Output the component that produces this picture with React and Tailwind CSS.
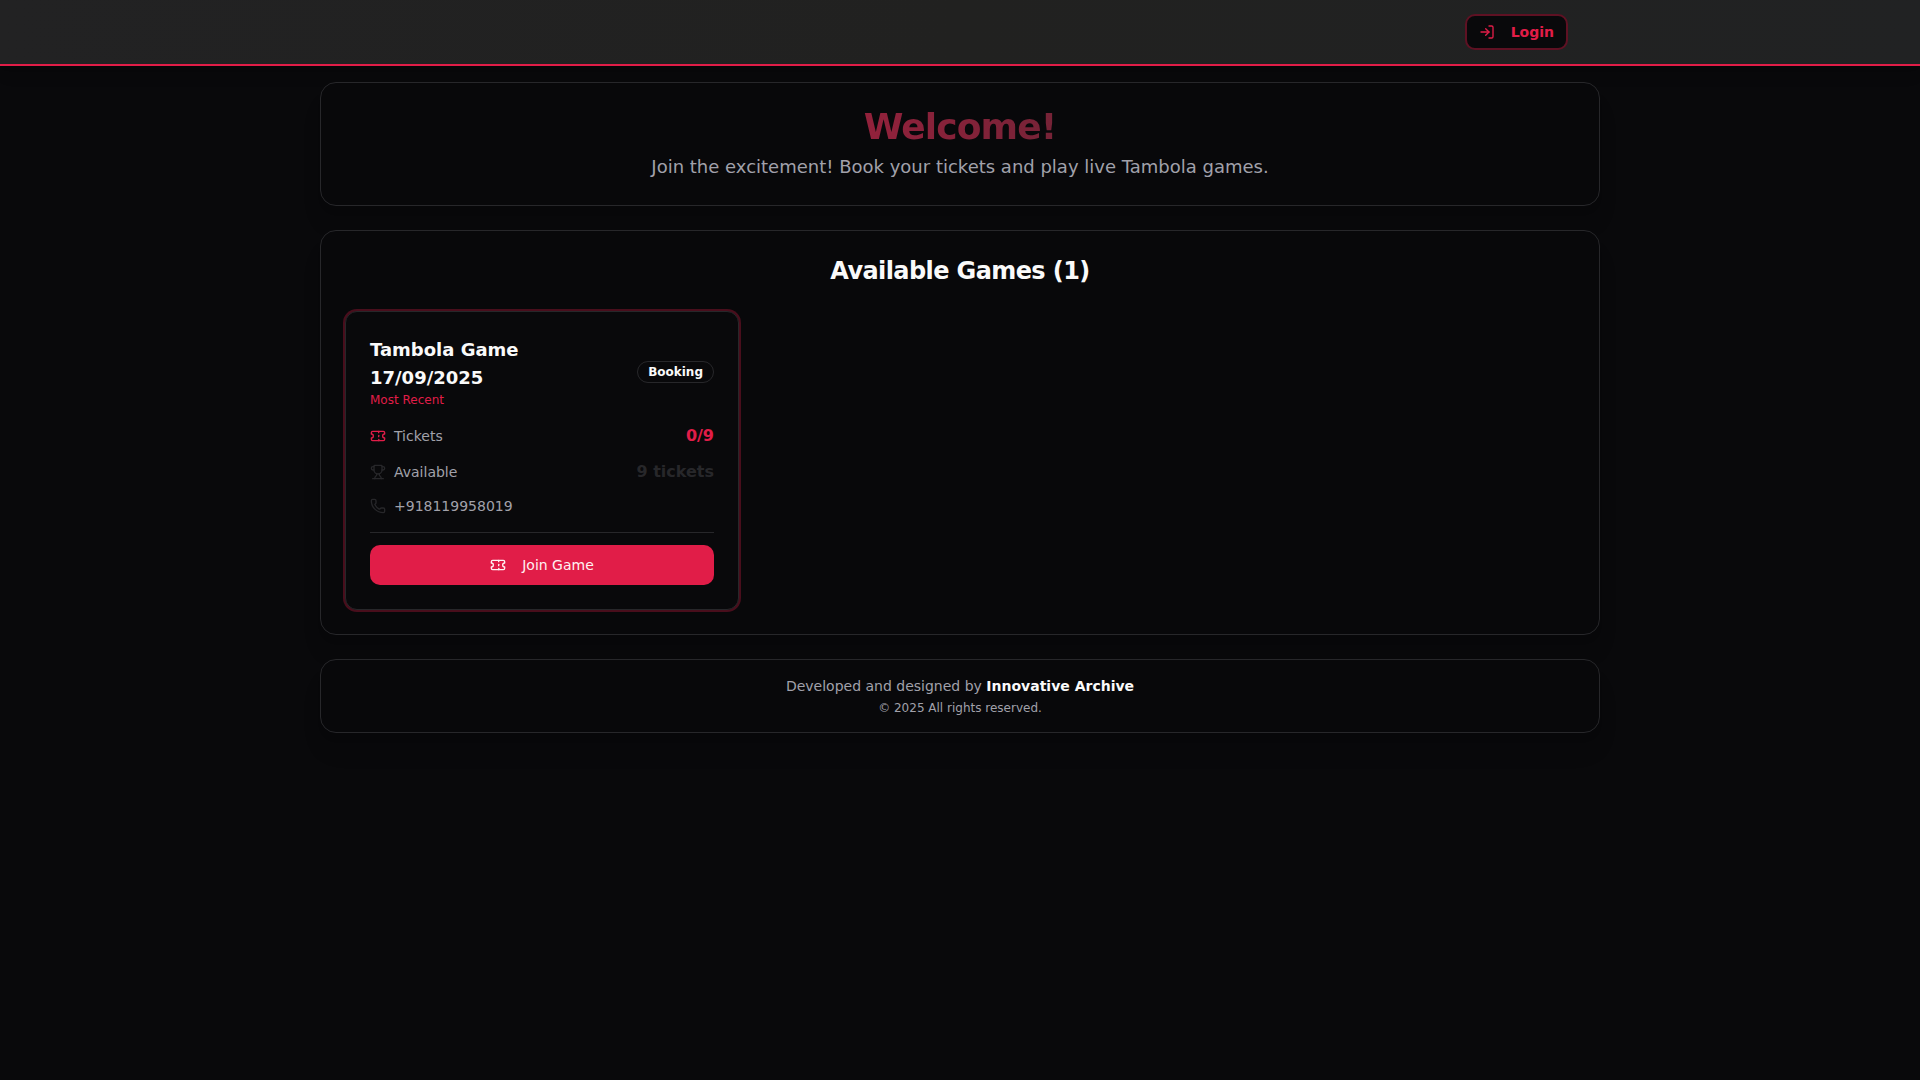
import { LogIn, Phone, Ticket, Trophy } from "lucide-react";

const games = [
  {
    id: 1,
    name: "Tambola Game 17/09/2025",
    status: "Booking",
    booked: 0,
    total: 9,
    phone: "+918119958019",
    recent: true,
  },
];

function Header() {
  return (
    <header className="bg-linear-to-r/srgb from-[#222223] via-[#212120] to-[#212223] border-b-2 border-[#e11d48] shadow-lg">
      <div className="max-w-7xl mx-auto h-16 px-8 flex items-center justify-end">
        <button
          type="button"
          className="h-9 px-3 inline-flex items-center gap-4 rounded-[10px] border-2 border-[#e11d48]/40 bg-[#09090b] text-sm font-semibold text-[#e11d48] hover:bg-[#e11d48]/10"
        >
          <LogIn className="size-4" />
          Login
        </button>
      </div>
    </header>
  );
}

function GameCard({ game }) {
  return (
    <article
      className={
        game.recent
          ? "rounded-xl border border-[#27272a] bg-[#09090b] p-6 space-y-4 ring-2 ring-[#e11d48]/30"
          : "rounded-xl border border-[#27272a] bg-[#09090b] p-6 space-y-4"
      }
    >
      {/* Name + status */}
      <div className="flex items-center justify-between gap-4">
        <div className="max-w-48">
          <h3 className="text-lg leading-7 font-bold text-[#fafafa]">{game.name}</h3>
          {game.recent && <p className="text-xs text-[#e11d48]">Most Recent</p>}
        </div>
        <span className="rounded-full border border-[#27272a] px-2.5 py-0.5 text-xs font-semibold text-[#fafafa]">
          {game.status}
        </span>
      </div>

      {/* Details */}
      <div className="space-y-3">
        <div className="flex items-center justify-between">
          <span className="flex items-center gap-2 text-sm text-[#a1a1aa]">
            <Ticket className="size-4 text-[#e11d48]" />
            Tickets
          </span>
          <span className="font-bold text-[#e11d48]">
            {game.booked}/{game.total}
          </span>
        </div>
        <div className="flex items-center justify-between">
          <span className="flex items-center gap-2 text-sm text-[#a1a1aa]">
            <Trophy className="size-4 text-[#27272a]" />
            Available
          </span>
          <span className="font-bold text-[#27272a]">
            {game.total - game.booked} tickets
          </span>
        </div>
        <div className="flex items-center gap-2 text-sm text-[#a1a1aa]">
          <Phone className="size-4 text-[#27272a]" />
          {game.phone}
        </div>
      </div>

      <div className="border-t border-[#27272a] pt-3">
        <button
          type="button"
          className="w-full h-10 px-4 flex items-center justify-center gap-4 rounded-[10px] bg-[#e11d48] text-sm font-medium text-[#fff1f2] hover:bg-[#e11d48]/90"
        >
          <Ticket className="size-4" />
          Join Game
        </button>
      </div>
    </article>
  );
}

export default function App() {
  return (
    <div className="min-h-screen bg-[#09090b] font-['DejaVu_Sans',sans-serif]">
      <Header />

      <main className="max-w-7xl mx-auto pt-4 pb-8 space-y-6">
        <section className="rounded-2xl border border-[#27272a] bg-[#08080a] p-6 space-y-1.5 text-center shadow-xl">
          <h1 className="text-4xl font-bold tracking-tight bg-linear-to-r/srgb from-[#e11d48] to-[#27272a] bg-clip-text text-transparent">
            Welcome!
          </h1>
          <p className="text-lg leading-7 text-[#a1a1aa]">
            Join the excitement! Book your tickets and play live Tambola games.
          </p>
        </section>

        <section className="rounded-2xl border border-[#27272a] bg-[#08080a] p-6 shadow-xl">
          <h2 className="text-2xl font-bold tracking-tight text-center text-[#fafafa]">
            Available Games ({games.length})
          </h2>
          <div className="mt-6 grid gap-6 md:grid-cols-2 lg:grid-cols-3">
            {games.map((game) => (
              <GameCard key={game.id} game={game} />
            ))}
          </div>
        </section>

        <footer className="rounded-2xl border border-[#27272a] bg-[#08080a] p-4 space-y-1 text-center text-[#a1a1aa] shadow-xl">
          <p className="text-sm">
            Developed and designed by{" "}
            <span className="font-semibold text-[#fafafa]">Innovative Archive</span>
          </p>
          <p className="text-xs">© 2025 All rights reserved.</p>
        </footer>
      </main>
    </div>
  );
}
